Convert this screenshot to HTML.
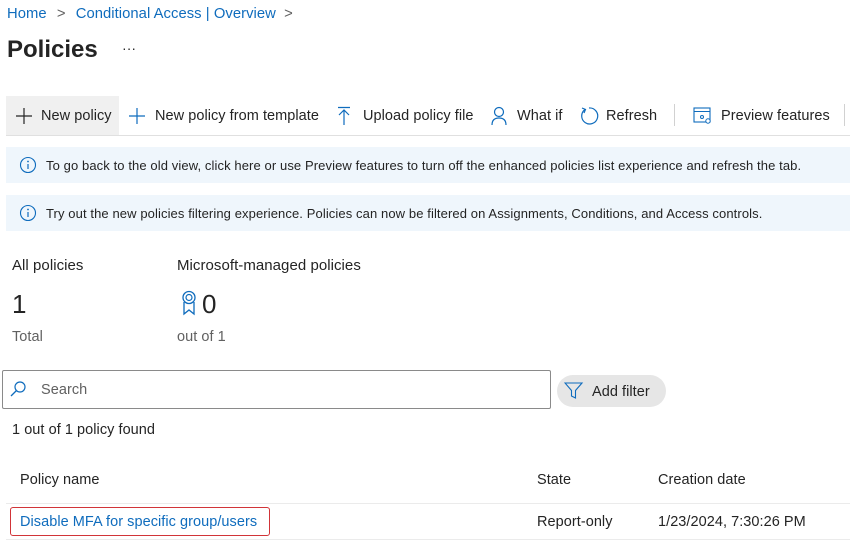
<!DOCTYPE html>
<html><head><style>
*{margin:0;padding:0;box-sizing:border-box}
body{width:850px;height:540px;overflow:hidden;background:#fff;font-family:"Liberation Sans",sans-serif;font-size:14.5px;color:#242424;position:relative;letter-spacing:0.05px}
.a{position:absolute;white-space:nowrap}
.blue{color:#0f6cbd}
.gray{color:#616161}
svg{position:absolute}
</style></head><body>
<div class="a blue" style="left:7px;top:6px;font-size:14.8px">Home <span style="color:#616161;margin:0 6px">&gt;</span> Conditional Access | Overview <span style="color:#616161;margin-left:4px">&gt;</span></div>
<div class="a" style="left:7px;top:36px;font-size:24px;font-weight:600;color:#242424;letter-spacing:0">Policies</div>
<div class="a" style="left:122px;top:40px;font-size:14px">···</div>

<div class="a" style="left:6px;top:96px;width:113px;height:39px;background:#f0f0f0"></div>
<div class="a" style="left:6px;top:135px;width:844px;height:1px;background:#e0e0e0"></div>
<svg style="left:15px;top:107px" width="18" height="18"><path d="M9 1v16M1 9h16" stroke="#242424" stroke-width="1.2"/></svg>
<div class="a" style="left:41px;top:108px">New policy</div>
<svg style="left:128px;top:107px" width="18" height="18"><path d="M9 1v16M1 9h16" stroke="#0f6cbd" stroke-width="1.2"/></svg>
<div class="a" style="left:155px;top:108px">New policy from template</div>
<svg style="left:337px;top:106px" width="14" height="20"><path d="M1 1.5h12M7 4v15M2 9l5-5 5 5" stroke="#0f6cbd" stroke-width="1.2" fill="none"/></svg>
<div class="a" style="left:363px;top:108px">Upload policy file</div>
<svg style="left:490px;top:106px" width="18" height="20"><circle cx="9" cy="6" r="4.5" stroke="#0f6cbd" stroke-width="1.2" fill="none"/><path d="M2 19c0-5 3-7 7-7s7 2 7 7" stroke="#0f6cbd" stroke-width="1.2" fill="none"/></svg>
<div class="a" style="left:517px;top:108px">What if</div>
<svg style="left:579px;top:106px" width="20" height="20"><path d="M6 3.5A8 8 0 1 0 10 2" stroke="#0f6cbd" stroke-width="1.2" fill="none"/><path d="M3 2l3.5 1.5L5 7" stroke="#0f6cbd" stroke-width="1.2" fill="none"/></svg>
<div class="a" style="left:606px;top:108px">Refresh</div>
<div class="a" style="left:674px;top:104px;width:1px;height:22px;background:#d1d1d1"></div>
<svg style="left:693px;top:107px" width="20" height="18"><rect x="1" y="1" width="16" height="14" stroke="#0f6cbd" fill="none" stroke-width="1.1"/><path d="M1 4.5h16" stroke="#0f6cbd"/><circle cx="9" cy="10" r="1.5" fill="none" stroke="#0f6cbd"/><circle cx="15" cy="14" r="2.2" fill="#fff" stroke="#0f6cbd"/></svg>
<div class="a" style="left:721px;top:108px">Preview features</div>
<div class="a" style="left:844px;top:104px;width:1px;height:22px;background:#d1d1d1"></div>

<div class="a" style="left:6px;top:147px;width:844px;height:36px;background:#eff6fc"></div>
<svg style="left:19px;top:156px" width="18" height="18"><circle cx="9" cy="9" r="7.5" stroke="#0f6cbd" fill="none" stroke-width="1.1"/><path d="M9 8v5" stroke="#0f6cbd" stroke-width="1.2"/><circle cx="9" cy="5.5" r=".9" fill="#0f6cbd"/></svg>
<div class="a" style="left:46px;top:158px;font-size:13px;letter-spacing:0.1px">To go back to the old view, click here or use Preview features to turn off the enhanced policies list experience and refresh the tab.</div>
<div class="a" style="left:6px;top:195px;width:844px;height:36px;background:#eff6fc"></div>
<svg style="left:19px;top:204px" width="18" height="18"><circle cx="9" cy="9" r="7.5" stroke="#0f6cbd" fill="none" stroke-width="1.1"/><path d="M9 8v5" stroke="#0f6cbd" stroke-width="1.2"/><circle cx="9" cy="5.5" r=".9" fill="#0f6cbd"/></svg>
<div class="a" style="left:46px;top:206px;font-size:13px;letter-spacing:0.1px">Try out the new policies filtering experience. Policies can now be filtered on Assignments, Conditions, and Access controls.</div>

<div class="a" style="left:12px;top:257px;font-size:15px">All policies</div>
<div class="a" style="left:12px;top:289px;font-size:26px">1</div>
<div class="a gray" style="left:12px;top:329px">Total</div>
<div class="a" style="left:177px;top:257px;font-size:15px">Microsoft-managed policies</div>
<svg style="left:180px;top:290px" width="20" height="26"><circle cx="9" cy="7.5" r="6" stroke="#0f6cbd" fill="none" stroke-width="1.3"/><circle cx="9" cy="7.5" r="3" stroke="#0f6cbd" fill="none" stroke-width="1.2"/><path d="M4 12v12l5-4 5 4V12" stroke="#0f6cbd" fill="none" stroke-width="1.3"/></svg>
<div class="a" style="left:202px;top:289px;font-size:26px">0</div>
<div class="a gray" style="left:177px;top:329px">out of 1</div>

<div class="a" style="left:2px;top:370px;width:549px;height:39px;border:1px solid #8a8a8a;border-radius:2px"></div>
<svg style="left:9px;top:380px" width="18" height="18"><circle cx="11" cy="7" r="5" stroke="#0f6cbd" fill="none" stroke-width="1.2"/><path d="M7.5 10.5L2 16" stroke="#0f6cbd" stroke-width="1.3"/></svg>
<div class="a gray" style="left:41px;top:382px">Search</div>
<div class="a" style="left:557px;top:375px;width:109px;height:32px;background:#e6e6e6;border-radius:16px"></div>
<svg style="left:564px;top:382px" width="20" height="18"><path d="M1 1h17l-6.5 7.5V16l-4-2V8.5z" stroke="#0f6cbd" fill="none" stroke-width="1.1"/></svg>
<div class="a" style="left:592px;top:384px">Add filter</div>

<div class="a" style="left:12px;top:422px">1 out of 1 policy found</div>
<div class="a" style="left:20px;top:472px">Policy name</div>
<div class="a" style="left:537px;top:472px">State</div>
<div class="a" style="left:658px;top:472px">Creation date</div>
<div class="a" style="left:6px;top:503px;width:844px;height:1px;background:#ebebeb"></div>
<div class="a" style="left:10px;top:507px;width:260px;height:29px;border:1.5px solid #d13438;border-radius:3px"></div>
<div class="a blue" style="left:20px;top:514px">Disable MFA for specific group/users</div>
<div class="a" style="left:537px;top:514px">Report-only</div>
<div class="a" style="left:658px;top:514px">1/23/2024, 7:30:26 PM</div>
<div class="a" style="left:6px;top:539px;width:844px;height:1px;background:#ebebeb"></div>
</body></html>
